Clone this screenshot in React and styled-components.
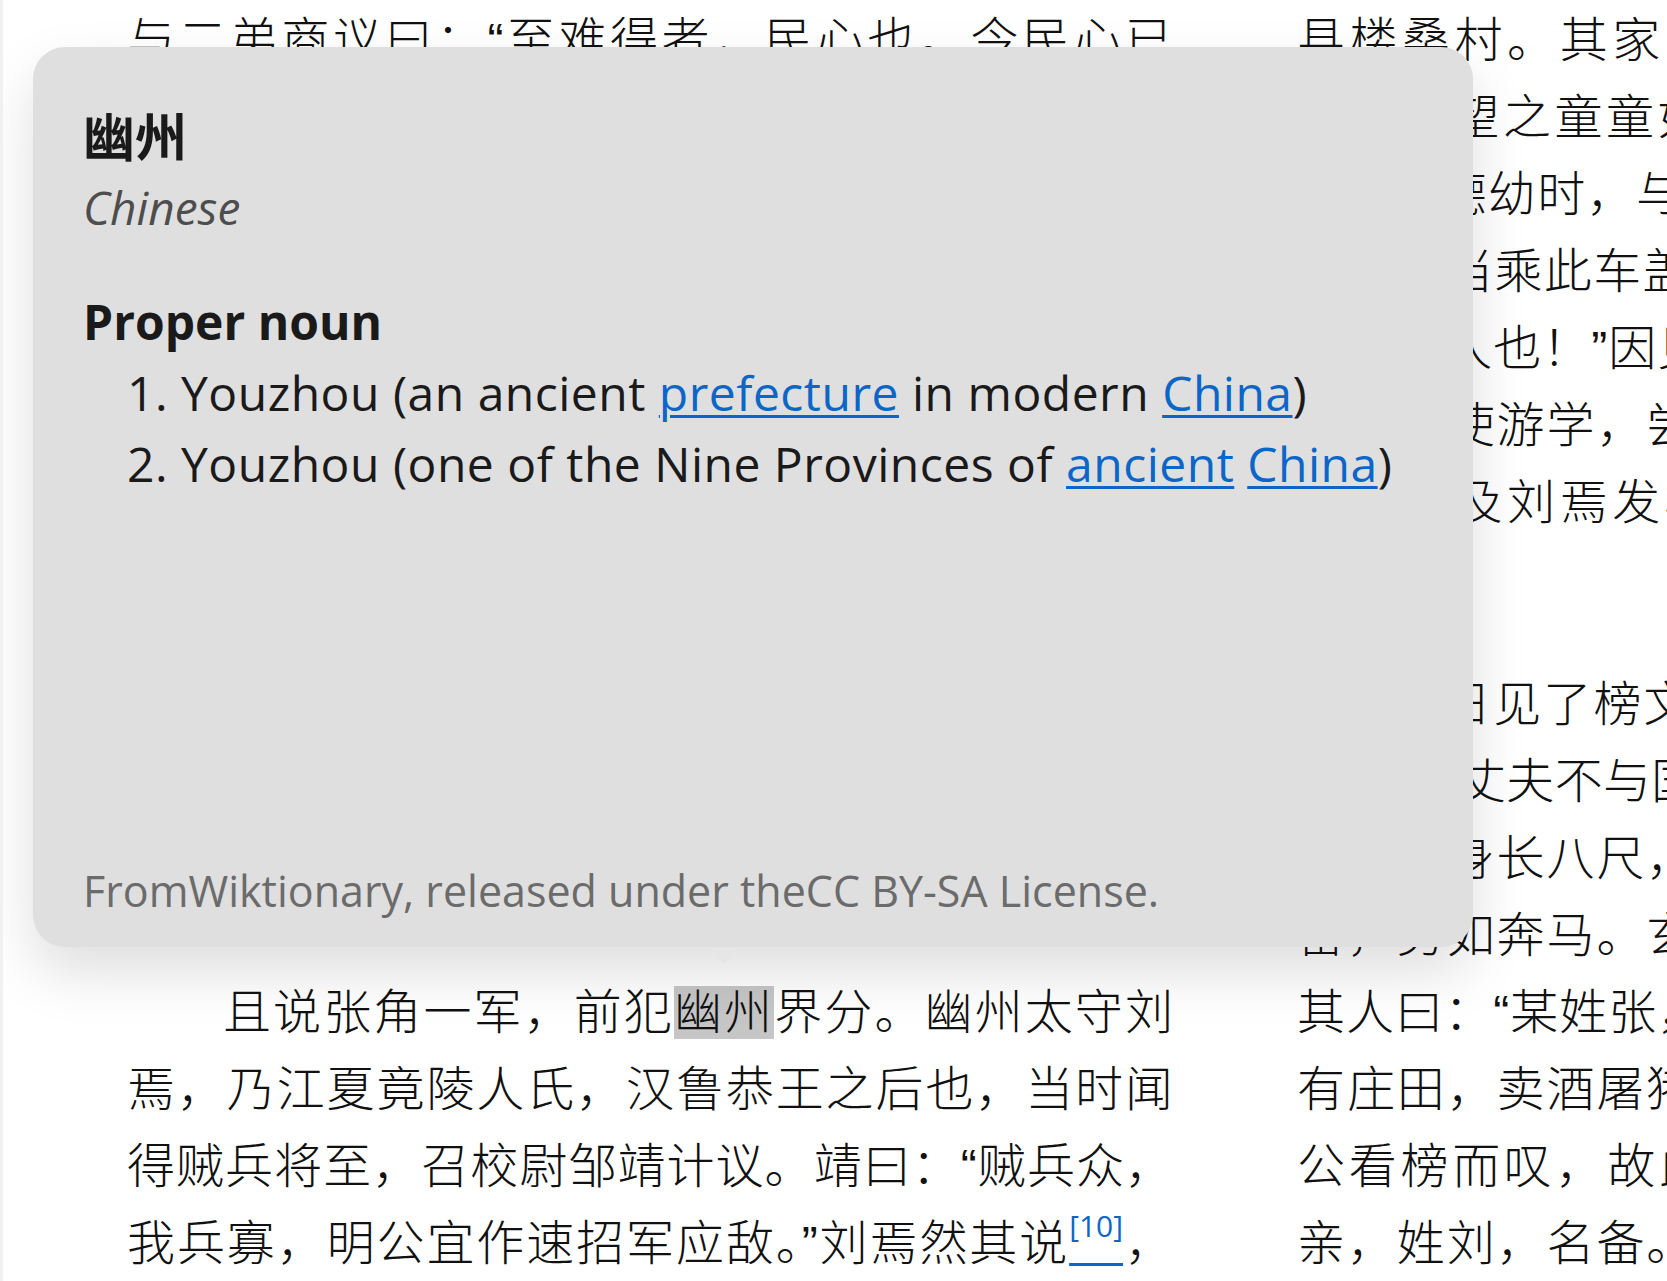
import React from 'react';
import styled, { createGlobalStyle } from 'styled-components';

const GlobalStyle = createGlobalStyle`
  html, body {
    margin: 0;
    padding: 0;
    background: #fff;
    overflow: hidden;
  }
`;

const Page = styled.div`
  position: relative;
  box-sizing: border-box;
  width: 1667px;
  height: 1281px;
  overflow: hidden;
  background: #fff;
  border-left: 3px solid #f1f1f1;
`;

const Spread = styled.div`
  display: flex;
  gap: 124px;
  padding: 2px 0 0 124px;
`;

const Column = styled.div`
  flex: 0 0 1046px;
  min-width: 0;
  font-family: "Liberation Sans", "Noto Sans CJK SC", sans-serif;
  font-weight: 300;
  font-size: 48px;
  line-height: 77px;
  color: #111;
`;

const Paragraph = styled.div`
  margin-bottom: 48px;
`;

const Line = styled.div`
  white-space: nowrap;
  text-align: ${p => (p.$last ? 'left' : 'justify')};
  text-align-last: ${p => (p.$last ? 'left' : 'justify')};
  text-indent: ${p => (p.$indent ? '2em' : '0')};
`;

const Mark = styled.span`
  background: #c6c6c6;
`;

const RefLink = styled.a`
  color: #0a66c8;
  text-decoration: underline;
  text-decoration-thickness: 3px;
  text-underline-offset: 3px;
`;

const Sup = styled.span`
  font-family: "Open Sans", sans-serif;
  font-weight: 400;
  font-size: 30px;
  line-height: 0;
  vertical-align: 23px;
`;

const Popup = styled.div`
  position: absolute;
  left: 30px;
  top: 47px;
  box-sizing: border-box;
  width: 1440px;
  height: 900px;
  padding: 58px 50px 31px;
  display: flex;
  flex-direction: column;
  background: #dfdfdf;
  border-radius: 32px;
  box-shadow: 0 26px 56px rgba(0, 0, 0, 0.13);
  font-family: "Open Sans", sans-serif;
  color: #1a1a1a;

  &::after {
    content: '';
    position: absolute;
    left: 672px;
    bottom: -16px;
    border-left: 19px solid transparent;
    border-right: 19px solid transparent;
    border-top: 16px solid #e6e6e6;
  }
`;

const Headword = styled.div`
  font-family: "Noto Sans CJK SC", sans-serif;
  font-weight: 700;
  font-size: 52px;
  line-height: 60px;
`;

const Language = styled.div`
  margin-top: 16px;
  font-style: italic;
  font-size: 46px;
  line-height: 52px;
  color: #4d4d4d;
`;

const PartOfSpeech = styled.div`
  margin-top: 59px;
  font-weight: 700;
  font-size: 48px;
  line-height: 60px;
`;

const Senses = styled.ol`
  margin: 5px 0 0;
  padding: 0 0 0 44px;
  list-style: none;
  counter-reset: sense;
`;

const Sense = styled.li`
  font-size: 48px;
  letter-spacing: 0.5px;
  line-height: 71px;
  counter-increment: sense;

  &::before {
    content: counter(sense) ". ";
  }
`;

const Link = styled.a`
  color: #0a66c8;
  text-decoration: underline;
  text-decoration-thickness: 3px;
  text-underline-offset: 4px;
`;

const Credit = styled.div`
  margin-top: auto;
  font-size: 43px;
  line-height: 50px;
  color: #6b6b6b;
`;

const leftColumn = [
  {
    lines: [
      '与二弟商议曰：“至难得者，民心也。今民心已',
      '顺，若不乘势取天下，诚为可惜。”遂一面私造黄',
      '旗，约期举事；一面使弟子唐周，驰书报封谞。',
      '唐周乃径赴省中告变。帝召大将军何进调兵擒马',
      '元义，斩之；次收封谞等一干人下狱。张角闻知',
      '事露，星夜举兵，自称天公将军，张宝称地公将',
      '军，张梁称人公将军。申言于众曰：“今汉运将',
      '终，大圣人出。汝等皆宜顺天从正，以乐太平。”',
      '四方百姓，裹黄巾从张角反者四五十万。贼势浩',
      '大，官军望风而靡。何进奏帝火速降诏，令各处',
      '备御，讨贼立功。一面遣中郎将卢植、皇甫嵩、朱',
      '儁，各引精兵，分三路讨之。',
    ],
  },
  {
    indent: true,
    open: true,
    lines: [
      '且说张角一军，前犯{幽州}界分。幽州太守刘',
      '焉，乃江夏竟陵人氏，汉鲁恭王之后也，当时闻',
      '得贼兵将至，召校尉邹靖计议。靖曰：“贼兵众，',
      '我兵寡，明公宜作速招军应敌。”刘焉然其说[10]，',
    ],
  },
];

const rightColumn = [
  {
    lines: [
      '县楼桑村。其家之东南，有一大桑树，高五丈',
      '余，遥望之童童如车盖。相者云：“此家必出贵',
      '人。”玄德幼时，与乡中小儿戏于树下，曰：“我为',
      '天子，当乘此车盖。”叔父刘元起奇其言，曰：“此',
      '儿非常人也！”因见玄德家贫，常资给之。年十五',
      '岁，母使游学，尝师事郑玄、卢植，与公孙瓒等',
      '为友。及刘焉发榜招军时，玄德年已二十八岁',
      '矣。',
    ],
  },
  {
    indent: true,
    open: true,
    lines: [
      '当日见了榜文，慨然长叹。随后一人厉声言',
      '曰：“大丈夫不与国家出力，何故长叹？”玄德回视',
      '其人，身长八尺，豹头环眼，燕颔虎须，声若巨',
      '雷，势如奔马。玄德见他形貌异常，问其姓名。',
      '其人曰：“某姓张，名飞，字翼德。世居涿郡，颇',
      '有庄田，卖酒屠猪，专好结交天下豪杰。恰才见',
      '公看榜而叹，故此相问。”玄德曰：“我本汉室宗',
      '亲，姓刘，名备。今闻黄巾倡乱，有志欲破贼安',
    ],
  },
];

const renderText = (text) =>
  text
    .split(/(\{[^}]+\}|\[\d+\])/)
    .filter(Boolean)
    .map((part, i) => {
      if (part.startsWith('{')) return <Mark key={i}>{part.slice(1, -1)}</Mark>;
      if (part.startsWith('[')) {
        return (
          <RefLink key={i} href="#">
            <Sup>{part}</Sup>
          </RefLink>
        );
      }
      return part;
    });

const TextColumn = ({ paragraphs }) => (
  <Column>
    {paragraphs.map((para, p) => (
      <Paragraph key={p}>
        {para.lines.map((line, i) => (
          <Line
            key={i}
            $indent={para.indent && i === 0}
            $last={!para.open && i === para.lines.length - 1}
          >
            {renderText(line)}
          </Line>
        ))}
      </Paragraph>
    ))}
  </Column>
);

export default function App() {
  return (
    <>
      <GlobalStyle />
      <Page>
        <Spread>
          <TextColumn paragraphs={leftColumn} />
          <TextColumn paragraphs={rightColumn} />
        </Spread>
        <Popup>
          <Headword>幽州</Headword>
          <Language>Chinese</Language>
          <PartOfSpeech>Proper noun</PartOfSpeech>
          <Senses>
            <Sense>
              Youzhou (an ancient <Link href="#">prefecture</Link> in modern{' '}
              <Link href="#">China</Link>)
            </Sense>
            <Sense>
              Youzhou (one of the Nine Provinces of <Link href="#">ancient</Link>{' '}
              <Link href="#">China</Link>)
            </Sense>
          </Senses>
          <Credit>FromWiktionary, released under theCC BY-SA License.</Credit>
        </Popup>
      </Page>
    </>
  );
}
